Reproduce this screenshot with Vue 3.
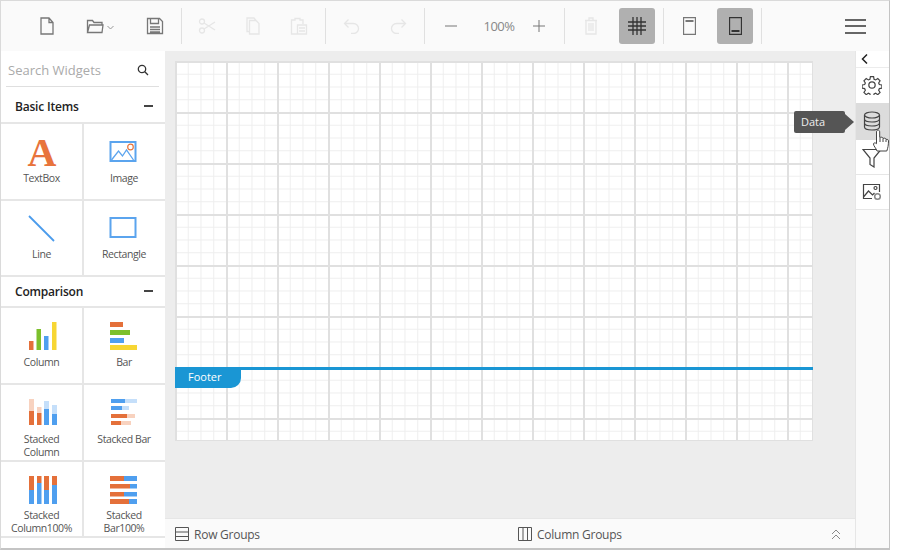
<template>
  <div class="app">
    <div class="toolbar">
      <div class="tb-group g1">
        <div class="tb-item w54">
          <svg width="16" height="18" viewBox="0 0 16 18" class="ico"><path d="M2 1h8l4 4.500V17H2z M10 1v4.500h4" /></svg>
        </div>
        <div class="tb-item w54">
          <svg width="30" height="18" viewBox="0 0 30 18" class="ico">
            <path d="M1.500 15.500V3.500h5l1.500 2h8v2.500 M1.500 15.500h14.500l1-7.500H3.500z" />
            <path class="thin" d="M21.500 9l3 3 3-3" />
          </svg>
        </div>
        <div class="tb-item w53">
          <svg width="18" height="18" viewBox="0 0 18 18" class="ico">
            <path d="M1.500 1.500h12l3 3v12h-15z M4.500 1.500v5h8v-5 M4 10h10 M4 12.500h10 M4 15h10" />
          </svg>
        </div>
      </div>
      <div class="sep"></div>
      <div class="tb-group g2 off">
        <div class="tb-item w46">
          <svg width="18" height="16" viewBox="0 0 18 16" class="ico">
            <circle cx="4" cy="3.500" r="2.500" /><circle cx="4" cy="12.500" r="2.500" />
            <path d="M6 5l11 7 M6 11l11-7" />
          </svg>
        </div>
        <div class="tb-item w46">
          <svg width="14" height="18" viewBox="0 0 14 18" class="ico">
            <path d="M3.500 3.500h6.500l3 3V17H3.500z M3.500 14.500H1V1h7l2 2.500" />
          </svg>
        </div>
        <div class="tb-item w46">
          <svg width="18" height="18" viewBox="0 0 18 18" class="ico">
            <path d="M13 7V3H10V1.500H5V3H1.500v14h6 M7.500 8h9v9h-9z M9 11h6 M9 14h6" />
          </svg>
        </div>
      </div>
      <div class="sep"></div>
      <div class="tb-group g3 off">
        <div class="tb-item w46">
          <svg width="18" height="16" viewBox="0 0 18 16" class="ico"><path d="M5.500 1.500L1.500 5.500l4 4 M1.500 5.500h9a5 5 0 0 1 0 10H8" /></svg>
        </div>
        <div class="tb-item w46">
          <svg width="18" height="16" viewBox="0 0 18 16" class="ico"><path d="M12.500 1.500l4 4-4 4 M16.500 5.500h-9a5 5 0 0 0 0 10H10" /></svg>
        </div>
      </div>
      <div class="sep"></div>
      <div class="tb-group g4">
        <div class="tb-item w52">
          <svg width="12" height="12" viewBox="0 0 12 12" class="ico thin-ico"><path d="M0 6h12" /></svg>
        </div>
        <div class="tb-item w44 zoom-val">100%</div>
        <div class="tb-item w36">
          <svg width="12" height="12" viewBox="0 0 12 12" class="ico thin-ico"><path d="M0 6h12 M6 0v12" /></svg>
        </div>
      </div>
      <div class="sep"></div>
      <div class="tb-group g5">
        <div class="tb-item w52 off">
          <svg width="14" height="18" viewBox="0 0 14 18" class="ico">
            <path d="M1 3.500h12 M5 3.500V1h4v2.500 M2 3.500V17h10V3.500 M5 6v8 M7 6v8 M9 6v8" />
          </svg>
        </div>
        <div class="tb-item w36 active">
          <svg width="18" height="18" viewBox="0 0 18 18" class="ico dark"><path d="M0 5h18 M0 9h18 M0 13h18 M5 0v18 M9 0v18 M13 0v18" /></svg>
        </div>
      </div>
      <div class="sep"></div>
      <div class="tb-group g6">
        <div class="tb-item w50">
          <svg width="13" height="18" viewBox="0 0 13 18" class="ico">
            <path d="M.5.500h12v17H.5z" /><path class="band" d="M2.500 4h8" />
          </svg>
        </div>
        <div class="tb-item w36 active">
          <svg width="13" height="18" viewBox="0 0 13 18" class="ico dark">
            <path d="M.5.500h12v17H.5z" /><path class="band" d="M2.500 14h8" />
          </svg>
        </div>
      </div>
      <div class="sep"></div>
      <div class="menu">
        <span></span><span></span><span></span>
      </div>
    </div>

    <div class="body">
      <aside class="widgets">
        <div class="search">
          <span class="search-text">Search Widgets</span>
          <svg width="12" height="12" viewBox="0 0 12 12" class="search-ico">
            <circle cx="5" cy="5" r="3.700" /><path d="M7.800 7.800L11 11" />
          </svg>
        </div>
        <div class="section first"><span>Basic Items</span><i class="minus"></i></div>
        <div class="cells">
          <div class="cell">
            <svg class="pic" width="30" height="30" viewBox="0 0 30 30">
              <text class="letter" x="15" y="28.500" text-anchor="middle">A</text>
            </svg>
            <div class="lbl">TextBox</div>
          </div>
          <div class="cell">
            <svg class="pic" width="30" height="30" viewBox="0 0 30 30">
              <rect x="1.500" y="5" width="25" height="19" fill="none" stroke="#5ba4ee" stroke-width="2" />
              <path d="M2.500 23l7-9 4 5 4-6 7 10" fill="none" stroke="#5ba4ee" stroke-width="1.300" />
              <circle cx="21.500" cy="10" r="2.800" fill="none" stroke="#e8743c" stroke-width="1.200" />
            </svg>
            <div class="lbl">Image</div>
          </div>
          <div class="cell">
            <svg class="pic" width="30" height="30" viewBox="0 0 30 30">
              <path d="M2 2l25 25" stroke="#4a9bec" stroke-width="1.800" />
            </svg>
            <div class="lbl">Line</div>
          </div>
          <div class="cell">
            <svg class="pic" width="30" height="30" viewBox="0 0 30 30">
              <rect x="1.500" y="4" width="25" height="19" fill="none" stroke="#5ba4ee" stroke-width="2" />
            </svg>
            <div class="lbl">Rectangle</div>
          </div>
        </div>
        <div class="section second"><span>Comparison</span><i class="minus"></i></div>
        <div class="cells">
          <div class="cell" v-for="w in charts" :key="w.id">
            <svg class="pic" width="30" height="30" viewBox="0 0 30 30">
              <rect v-for="(r, i) in w.rects" :key="i" :x="r[0]" :y="r[1]" :width="r[2]" :height="r[3]" :fill="r[4]" />
            </svg>
            <div class="lbl">
              <span v-for="(t, i) in w.label" :key="i">{{ t }}</span>
            </div>
          </div>
        </div>
      </aside>

      <main class="center">
        <div class="stage">
          <div class="sheet">
            <div class="sheet-body"></div>
            <div class="footer-line"></div>
            <div class="footer-tab">Footer</div>
          </div>
        </div>
        <div class="groups">
          <div class="grp row-grp">
            <svg width="14" height="14" viewBox="0 0 14 14" class="grp-ico">
              <path d="M.5.500h13v13H.5z M.5 5h13 M.5 9.500h13" />
            </svg>
            Row Groups
          </div>
          <div class="grp">
            <svg width="14" height="14" viewBox="0 0 14 14" class="grp-ico">
              <path d="M.5.500h13v13H.5z M5 .5v13 M9.500 .5v13" />
            </svg>
            Column Groups
          </div>
          <svg width="10" height="11" viewBox="0 0 10 11" class="collapse">
            <path d="M1 5l4-4 4 4 M1 10l4-4 4 4" />
          </svg>
        </div>
      </main>

      <aside class="rail">
        <div class="rail-top">
          <svg width="8" height="10" viewBox="0 0 8 10" class="chev"><path d="M6 .5L1.500 5 6 9.500" /></svg>
        </div>
        <div class="rail-item gear">
          <svg width="20" height="20" viewBox="0 0 24 24" class="ico2 gear-ico">
            <circle cx="12" cy="12" r="3.800" />
            <path d="M10 1.500h4l.6 3.200 2 .9 2.700-1.800 2.900 2.900-1.800 2.700.9 2 3.200.6v4l-3.200.6-.9 2 1.800 2.700-2.900 2.900-2.700-1.800-2 .9-.6 3.200h-4l-.6-3.200-2-.9-2.700 1.800-2.900-2.900 1.800-2.700-.9-2-3.200-.6v-4l3.200-.6.900-2-1.800-2.700 2.900-2.900 2.700 1.800 2-.9z" transform="translate(0.600 0.600) scale(.95)" />
          </svg>
        </div>
        <div class="rail-item data">
          <svg width="18" height="20" viewBox="0 0 18 20" class="ico2">
            <ellipse cx="9" cy="4" rx="7.500" ry="3" />
            <path d="M1.500 4v12c0 1.700 3.400 3 7.500 3s7.500-1.300 7.500-3V4 M1.500 8c0 1.700 3.400 3 7.500 3s7.500-1.300 7.500-3 M1.500 12c0 1.700 3.400 3 7.500 3s7.500-1.300 7.500-3" />
          </svg>
        </div>
        <div class="rail-item filter">
          <svg width="20" height="20" viewBox="0 0 20 20" class="ico2">
            <path d="M1 1.500h18l-7 8.500v9l-4-2.500V10z" />
          </svg>
        </div>
        <div class="rail-item image">
          <svg width="20" height="18" viewBox="0 0 20 18" class="ico2">
            <path d="M10 15.500H1.500v-14h16V9 M1.500 14l5-6 4 4 2-2" />
            <circle cx="13.500" cy="5" r="1.500" />
            <circle cx="15.500" cy="13.500" r="2.800" class="small-gear" />
          </svg>
        </div>
        <div class="rail-rest"></div>

        <div class="tip">Data</div>
        <svg width="17" height="24" viewBox="0 0 17 24" class="hand">
          <path d="M4 22c-1-3-3.500-5-3.500-7 0-1.300 1.700-1.500 3-.3V3c0-2.600 3.200-2.600 3.200 0v5.500c1.700-.7 3-.3 3.400.9 1.500-.6 2.700-.2 3 1 1.200-.4 2.400.2 2.400 1.600 0 4-.6 7-1.700 10z" />
          <path d="M7 9v4 M10 9.500v3.500 M13 10.500V13" />
        </svg>
      </aside>
    </div>
  </div>
</template>

<script setup>
const orange = "#e4703a";
const blue = "#4f9fef";
const lightOrange = "#f8d2bf";
const lightBlue = "#c5dffa";

// rects are x, y, w, h, fill inside a 30x30 box
const charts = [
  {
    id: "column",
    label: ["Column"],
    rects: [
      [2, 20, 4.5, 9, orange],
      [9.5, 8, 4.5, 21, "#7cc02c"],
      [17, 15, 4.5, 14, blue],
      [25, 1, 4.5, 28, "#f7d633"],
    ],
  },
  {
    id: "bar",
    label: ["Bar"],
    rects: [
      [1, 1, 13, 5, orange],
      [1, 9, 20, 5, "#7cc02c"],
      [1, 17, 14, 5, blue],
      [1, 24, 27, 5, "#f7d633"],
    ],
  },
  {
    id: "stacked-column",
    label: ["Stacked", "Column"],
    rects: [
      [2, 1, 5, 12, lightOrange],
      [2, 13, 5, 14, orange],
      [10, 9, 4.5, 6, lightOrange],
      [10, 15, 4.5, 12, orange],
      [17, 3, 5, 8, lightBlue],
      [17, 11, 5, 16, blue],
      [25, 7, 5, 9, lightBlue],
      [25, 16, 5, 11, blue],
    ],
  },
  {
    id: "stacked-bar",
    label: ["Stacked Bar"],
    rects: [
      [2, 1, 14, 4, blue],
      [16, 1, 12, 4, lightBlue],
      [2, 8, 11, 4, blue],
      [13, 8, 7, 4, lightBlue],
      [2, 16, 16, 4, orange],
      [18, 16, 8, 4, lightOrange],
      [2, 23, 10, 4, orange],
      [12, 23, 10, 4, lightOrange],
    ],
  },
  {
    id: "stacked-column-100",
    label: ["Stacked", "Column100%"],
    rects: [
      [2, 1, 5, 14, orange],
      [2, 15, 5, 14, blue],
      [10, 1, 4.5, 7, orange],
      [10, 8, 4.5, 21, blue],
      [17, 1, 5, 14, orange],
      [17, 15, 5, 14, blue],
      [25, 1, 5, 9, orange],
      [25, 10, 5, 19, blue],
    ],
  },
  {
    id: "stacked-bar-100",
    label: ["Stacked", "Bar100%"],
    rects: [
      [1, 1, 14, 5, orange],
      [15, 1, 13, 5, blue],
      [1, 9, 20, 4.5, orange],
      [21, 9, 7, 4.5, blue],
      [1, 17, 14, 4.5, orange],
      [15, 17, 13, 4.5, blue],
      [1, 24, 19, 5, orange],
      [20, 24, 8, 5, blue],
    ],
  },
];
</script>

<style>
html,
body {
  margin: 0;
  background: #fff;
}
</style>

<style scoped>
.app {
  box-sizing: border-box;
  width: 890px;
  height: 550px;
  display: flex;
  flex-direction: column;
  border-top: 1px solid #dadada;
  border-left: 1px solid #dadada;
  border-right: 1px solid #c4c4c4;
  border-bottom: 2px solid #c4c4c4;
  font-family: "Open Sans", "Noto Sans", sans-serif;
  color: #555;
  overflow: hidden;
}

.toolbar {
  height: 50px;
  flex: none;
  display: flex;
  align-items: center;
  padding-left: 19px;
  background: #fafafa;
}
.tb-group {
  display: flex;
  align-items: center;
  height: 36px;
}
.g2 {
  padding-left: 2px;
  padding-right: 3px;
}
.g3 {
  padding-left: 3px;
  padding-right: 3px;
}
.g4 {
  padding-right: 7px;
}
.g5,
.g6 {
  padding-right: 8px;
}
.g5 .active {
  margin-left: 2px;
}
.g6 .active {
  margin-left: 3px;
}
.tb-item {
  height: 36px;
  display: flex;
  align-items: center;
  justify-content: center;
}
.w54 {
  width: 54px;
}
.w53 {
  width: 53px;
}
.w52 {
  width: 52px;
}
.w50 {
  width: 50px;
}
.w46 {
  width: 46px;
}
.w44 {
  width: 44px;
}
.w36 {
  width: 36px;
}
.active {
  background: #b0b0b0;
  border-radius: 3px;
}
.sep {
  width: 1px;
  height: 36px;
  background: #e0e0e0;
}
.ico {
  fill: none;
  stroke: #777;
  stroke-width: 1.300;
}
.ico .thin {
  stroke: #999;
  stroke-width: 1;
}
.ico .band {
  stroke-width: 2;
}
.thin-ico {
  stroke: #777;
  stroke-width: 1;
}
.ico.dark {
  stroke: #333;
}
.off .ico {
  stroke: #e6e6e6;
}
.zoom-val {
  font-size: 13px;
  letter-spacing: -0.5px;
  color: #888;
}
.menu {
  margin-left: auto;
  margin-right: 23px;
  width: 21px;
  display: flex;
  flex-direction: column;
  gap: 4.500px;
}
.menu span {
  height: 2px;
  background: #666;
}

.body {
  flex: 1;
  min-height: 0;
  display: flex;
}

.widgets {
  width: 164px;
  flex: none;
  background: #fff;
}
.search {
  height: 36px;
  box-sizing: border-box;
  margin: 0 6px 0 5px;
  padding: 2px 10px 0 2px;
  display: flex;
  align-items: center;
  justify-content: space-between;
  border-bottom: 1px solid #dfdfdf;
}
.search-text {
  font-size: 13px;
  color: #aaa;
}
.search-ico {
  fill: none;
  stroke: #333;
  stroke-width: 1.300;
}
.section {
  box-sizing: border-box;
  padding: 0 12px 0 14px;
  display: flex;
  align-items: center;
  justify-content: space-between;
  font-size: 12px;
  font-weight: 600;
  letter-spacing: -0.2px;
  color: #222;
}
.section.first {
  height: 35px;
  padding-top: 3px;
}
.section.second {
  height: 29px;
  padding-bottom: 1px;
}
.minus {
  width: 9px;
  height: 2px;
  background: #444;
}
.cells {
  display: grid;
  grid-template-columns: 81px 81px;
  grid-auto-rows: 74.670px;
  gap: 2px;
  padding: 2px 0;
  background: #e6e6e6;
}
.cell {
  background: #fff;
  display: flex;
  flex-direction: column;
  align-items: center;
  padding-top: 13px;
  box-sizing: border-box;
}
.cell:nth-child(even) {
  padding-right: 1px;
}
.pic {
  display: block;
  flex: none;
  height: 30px;
  overflow: visible;
}
.letter {
  font-family: "Liberation Serif", serif;
  font-weight: 700;
  font-size: 40px;
  fill: #e8743c;
}
.lbl {
  margin-top: 4.700px;
  font-size: 10.500px;
  line-height: 13px;
  letter-spacing: -0.4px;
  text-align: center;
  color: #555;
}
.lbl span {
  display: block;
  height: 13px;
}

.center {
  flex: 1;
  min-width: 0;
  display: flex;
  flex-direction: column;
  background: #ededed;
}
.stage {
  flex: 1;
  padding: 10px 0 0 10px;
}
.sheet {
  width: 638px;
  height: 380px;
  box-sizing: border-box;
  border: 1px solid #e0e0e0;
  background-color: #fff;
  background-image:
    linear-gradient(to right, #e0e0e0 2px, transparent 2px),
    linear-gradient(to bottom, #e0e0e0 2px, transparent 2px),
    linear-gradient(to right, #eeeeee 1px, transparent 1px),
    linear-gradient(to bottom, #eeeeee 1px, transparent 1px);
  background-size: 51px 51px, 51px 51px, 12.750px 12.750px, 12.750px 12.750px;
  background-origin: border-box;
}
.sheet-body {
  height: 305px;
}
.footer-line {
  height: 3px;
  margin: 0 -1px;
  background: #1a96d4;
}
.footer-tab {
  width: 53px;
  height: 20px;
  margin-left: -1px;
  margin-top: -2px;
  padding-left: 13px;
  background: #1a96d4;
  border-bottom-right-radius: 10px;
  font-size: 11px;
  line-height: 18px;
  color: #fff;
}
.groups {
  height: 28px;
  flex: none;
  display: flex;
  align-items: center;
  padding: 1px 0 0 10px;
  box-sizing: content-box;
  background: #fafafa;
  border-top: 1px solid #e6e6e6;
  font-size: 12px;
  letter-spacing: -0.25px;
  color: #555;
}
.grp {
  display: flex;
  align-items: center;
  gap: 5px;
}
.row-grp {
  width: 343px;
}
.grp-ico {
  fill: none;
  stroke: #555;
  stroke-width: 1;
}
.collapse {
  margin-left: auto;
  margin-right: 14px;
  fill: none;
  stroke: #888;
  stroke-width: 1;
}

.rail {
  position: relative;
  width: 33px;
  flex: none;
  display: flex;
  flex-direction: column;
  background: #fafafa;
  border-left: 1px solid #e6e6e6;
}
.rail-top {
  height: 16px;
  flex: none;
  background: #fff;
  display: flex;
  align-items: center;
  padding-left: 5px;
  border-bottom: 1px solid #ececec;
}
.chev {
  fill: none;
  stroke: #222;
  stroke-width: 1.500;
}
.rail-item {
  display: flex;
  justify-content: center;
  align-items: center;
  background: #fff;
  flex: none;
  padding-right: 2px;
}
.gear {
  height: 34px;
  padding-bottom: 1px;
}
.data {
  height: 37px;
  background: #dcdcdc;
  padding-bottom: 2px;
  box-sizing: border-box;
}
.filter {
  height: 35px;
  border-bottom: 1px solid #e6e6e6;
  padding-top: 2px;
  box-sizing: border-box;
}
.image {
  height: 35px;
  border-bottom: 1px solid #e6e6e6;
  box-sizing: border-box;
}
.rail-rest {
  flex: 1;
}
.ico2 {
  fill: none;
  stroke: #444;
  stroke-width: 1.200;
}
.gear-ico {
  stroke-width: 1.500;
}
.small-gear {
  fill: #fff;
  stroke: #888;
  stroke-width: 1.500;
}
.tip {
  position: absolute;
  top: 60px;
  left: -62px;
  width: 51px;
  height: 22px;
  box-sizing: border-box;
  padding-left: 7px;
  background: #555;
  border-radius: 2px;
  font-size: 11px;
  line-height: 22px;
  color: #eee;
}
.tip::after {
  content: "";
  position: absolute;
  top: 3px;
  left: 51px;
  border: solid transparent;
  border-width: 8px 0 8px 9px;
  border-left-color: #555;
}
.hand {
  position: absolute;
  top: 78px;
  left: 17px;
  fill: #fff;
  stroke: #444;
  stroke-width: 1;
}
</style>
